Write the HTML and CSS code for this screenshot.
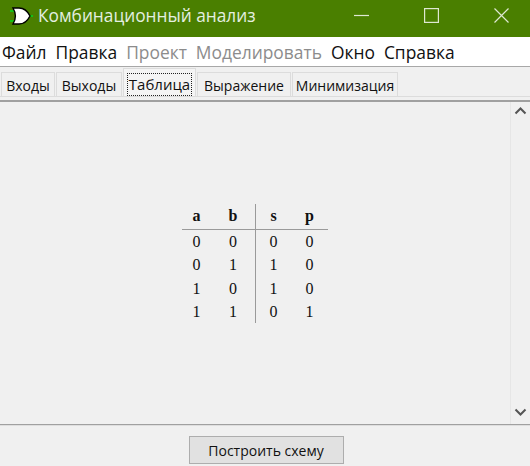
FILE: index.html
```html
<!DOCTYPE html>
<html lang="ru">
<head>
  <meta charset="UTF-8">
  <title>Комбинационный анализ</title>
  <link rel="stylesheet" href="styles.css">
</head>
<body>
  <div class="window">
    <div class="titlebar">
      <svg class="app-icon" width="24" height="18" viewBox="0 0 24 18">
        <path d="M0 4h5M0 14h5M19 9h4" stroke="#16c016" stroke-width="2" fill="none"/>
        <path d="M3 1h6c5 0 9 4 11 8-2 4-6 8-11 8H3c3-5 3-11 0-16z" fill="#fff" stroke="#000" stroke-width="1.4"/>
      </svg>
      <span class="title">Комбинационный анализ</span>
      <div class="win-btns">
        <svg width="15" height="15" viewBox="0 0 15 15"><path d="M0 7.5h15" stroke="#dfe8d2" stroke-width="1.2"/></svg>
        <svg width="15" height="15" viewBox="0 0 15 15"><rect x="0.6" y="0.6" width="13.8" height="13.8" fill="none" stroke="#dfe8d2" stroke-width="1.2"/></svg>
        <svg width="15" height="15" viewBox="0 0 15 15"><path d="M0.5 0.5l14 14M14.5 0.5l-14 14" stroke="#dfe8d2" stroke-width="1.2"/></svg>
      </div>
    </div>

    <div class="menubar">
      <span>Файл</span>
      <span>Правка</span>
      <span class="off">Проект</span>
      <span class="off">Моделировать</span>
      <span>Окно</span>
      <span>Справка</span>
    </div>

    <div class="tabs">
      <div class="tab-strip">
        <div class="tab w-in">Входы</div>
        <div class="tab w-out">Выходы</div>
        <div class="tab active w-tbl"><span class="focus">Таблица</span></div>
        <div class="tab w-expr">Выражение</div>
        <div class="tab w-min">Минимизация</div>
      </div>
    </div>

    <div class="content">
      <div class="pane">
        <div class="truth">
          <div class="cell head left">a</div><div class="cell head left">b</div><div class="cell head sep-l">s</div><div class="cell head">p</div>
          <div class="cell left">0</div><div class="cell left">0</div><div class="cell sep-l">0</div><div class="cell">0</div>
          <div class="cell left">0</div><div class="cell left">1</div><div class="cell sep-l">1</div><div class="cell">0</div>
          <div class="cell left">1</div><div class="cell left">0</div><div class="cell sep-l">1</div><div class="cell">0</div>
          <div class="cell left">1</div><div class="cell left">1</div><div class="cell sep-l">0</div><div class="cell">1</div>
        </div>
      </div>
      <div class="scrollbar">
        <svg width="13" height="8" viewBox="0 0 13 8"><path d="M1.5 6.5l5-5 5 5" fill="none" stroke="#555" stroke-width="2"/></svg>
        <svg width="13" height="8" viewBox="0 0 13 8"><path d="M1.5 1.5l5 5 5-5" fill="none" stroke="#555" stroke-width="2"/></svg>
      </div>
    </div>

    <div class="footer">
      <button class="build">Построить схему</button>
    </div>
  </div>
</body>
</html>
```

FILE: styles.css
```css
html, body{
  margin: 0;
  padding: 0;
}
body{
  width: 530px;
  height: 466px;
  overflow: hidden;
  background: #f0f0f0;
  font-family: "Open Sans", "Noto Sans", sans-serif;
  color: #111;
}
.window{
  display: flex;
  flex-direction: column;
  height: 466px;
}

/* title */
.titlebar{
  height: 37px;
  flex: none;
  box-sizing: border-box;
  display: flex;
  align-items: center;
  background: #4a7f00;
  padding: 0 0 6px 10px;
}
.app-icon{
  flex: none;
  margin-right: 4px;
}
.title{
  color: #e4efe0;
  font-size: 17.3px;
}
.win-btns{
  margin-left: auto;
  display: flex;
  gap: 55px;
  padding-right: 21px;
}

/* menu */
.menubar{
  height: 30px;
  flex: none;
  display: flex;
  align-items: center;
  gap: 9px;
  background: #fff;
  padding-left: 2px;
  font-size: 17.4px;
  border-bottom: 1px solid #a8a8a8;
  box-sizing: border-box;
}
.menubar .off{
  color: #8c8c8c;
}

/* tabs */
.tabs{
  height: 35px;
  flex: none;
  box-sizing: border-box;
  padding-bottom: 3px;
  border-bottom: 2px solid #a0a0a0;
  font-size: 14px;
}
.tab-strip{
  height: 30px;
  box-sizing: border-box;
  display: flex;
  align-items: flex-end;
  padding-left: 1px;
  gap: 1px;
  border-bottom: 1px solid #dcdcdc;
}
.tab{
  height: 24px;
  box-sizing: border-box;
  display: flex;
  align-items: center;
  justify-content: center;
  border: 1px solid #dcdcdc;
  border-bottom: 0;
  padding-top: 1px;
}
.tab.active{
  height: 28px;
  padding: 3px 0 0;
  background: #f4f4f4;
  font-size: 15px;
}
.focus{
  border: 1px dotted #222;
  padding: 0 1px;
  line-height: 21px;
}
.w-in{ width: 54px; }
.w-out{ width: 66px; }
.w-tbl{ width: 73px; }
.w-expr{ width: 94px; }
.w-min{ width: 106px; }

/* table */
.content{
  flex: 1;
  display: flex;
  min-height: 0;
  border-bottom: 1px solid #a0a0a0;
}
.pane{
  flex: 1;
  display: flex;
  align-items: center;
  justify-content: center;
}
.truth{
  display: grid;
  grid-template-columns: 36px 37px 36px 37px;
  grid-template-rows: 26px repeat(4, 23.25px);
  width: 146px;
  font-family: "Liberation Serif", serif;
  font-size: 16px;
  color: #111;
}
.cell{
  display: flex;
  align-items: center;
  justify-content: center;
  padding-top: 2px;
  box-sizing: border-box;
}
.left{
  padding-right: 7px;
}
.head{
  font-weight: bold;
  font-size: 16px;
  padding-top: 0;
  border-bottom: 1px solid #9a9a9a;
}
.sep-l{
  border-left: 1px solid #9a9a9a;
}
.scrollbar{
  width: 19px;
  flex: none;
  background: #f0f0f0;
  border-left: 1px solid #e6e6e6;
  display: flex;
  flex-direction: column;
  align-items: center;
  justify-content: space-between;
  padding: 5px 0 8px;
}

/* bottom */
.footer{
  height: 41px;
  flex: none;
  display: flex;
  justify-content: center;
  align-items: flex-end;
  padding-bottom: 2px;
  box-sizing: border-box;
  border-top: 1px solid #dedede;
}
.build{
  width: 155px;
  height: 28px;
  font-family: inherit;
  font-size: 14px;
  color: #111;
  background: #e1e1e1;
  border: 1px solid #adadad;
  padding: 0;
  margin-left: 2px;
}
```
